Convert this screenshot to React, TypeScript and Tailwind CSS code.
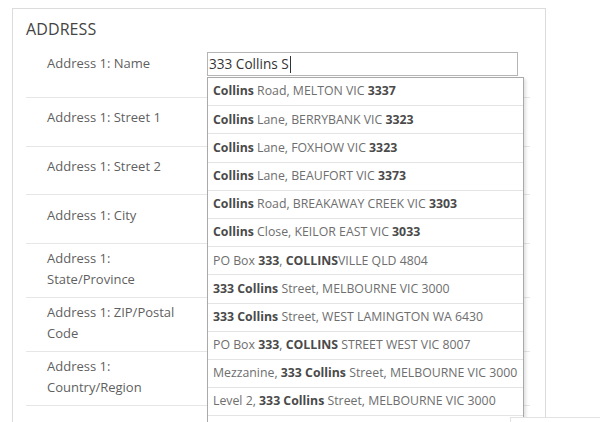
import React from 'react';

type Part = { t: string; b?: boolean };

const suggestions: Part[][] = [
  [{ t: 'Collins', b: true }, { t: ' Road, MELTON VIC ' }, { t: '3337', b: true }],
  [{ t: 'Collins', b: true }, { t: ' Lane, BERRYBANK VIC ' }, { t: '3323', b: true }],
  [{ t: 'Collins', b: true }, { t: ' Lane, FOXHOW VIC ' }, { t: '3323', b: true }],
  [{ t: 'Collins', b: true }, { t: ' Lane, BEAUFORT VIC ' }, { t: '3373', b: true }],
  [{ t: 'Collins', b: true }, { t: ' Road, BREAKAWAY CREEK VIC ' }, { t: '3303', b: true }],
  [{ t: 'Collins', b: true }, { t: ' Close, KEILOR EAST VIC ' }, { t: '3033', b: true }],
  [{ t: 'PO Box ' }, { t: '333', b: true }, { t: ', ' }, { t: 'COLLINS', b: true }, { t: 'VILLE QLD 4804' }],
  [{ t: '333 Collins', b: true }, { t: ' Street, MELBOURNE VIC 3000' }],
  [{ t: '333 Collins', b: true }, { t: ' Street, WEST LAMINGTON WA 6430' }],
  [{ t: 'PO Box ' }, { t: '333', b: true }, { t: ', ' }, { t: 'COLLINS', b: true }, { t: ' STREET WEST VIC 8007' }],
  [{ t: 'Mezzanine, ' }, { t: '333 Collins', b: true }, { t: ' Street, MELBOURNE VIC 3000' }],
  [{ t: 'Level 2, ' }, { t: '333 Collins', b: true }, { t: ' Street, MELBOURNE VIC 3000' }],
  [],
];

const rows: { label: string[]; h: string; pt: string }[] = [
  { label: ['Address 1: Street 1'], h: 'h-[49px]', pt: 'pt-[9px]' },
  { label: ['Address 1: Street 2'], h: 'h-[48px]', pt: 'pt-[9px]' },
  { label: ['Address 1: City'], h: 'h-[49px]', pt: 'pt-[10px]' },
  { label: ['Address 1:', 'State/Province'], h: 'h-[54px]', pt: 'pt-[4px]' },
  { label: ['Address 1: ZIP/Postal', 'Code'], h: 'h-[54px]', pt: 'pt-[4px]' },
  { label: ['Address 1:', 'Country/Region'], h: 'h-[54px]', pt: 'pt-[4px]' },
];

export default function App() {
  return (
    <div className="relative w-[600px] h-[422px] overflow-hidden bg-white font-['Open_Sans',sans-serif]">
      <div className="ml-[12px] mt-[8px] w-[534px] h-[430px] border border-[#dcdcdc] pl-[13px] pr-[15px]">
        <h2 className="pt-[9px] h-[36px] text-[16px] leading-[22px] text-[#444] tracking-[0.1px]">ADDRESS</h2>

        {/* name row with input */}
        <div className="flex h-[53px] border-b border-[#e6e6e6]">
          <div className="w-[181px] pl-[21px] pt-[8px] text-[13px] leading-[21px] text-[#5f5f5f]">
            Address 1: Name
          </div>
          <div className="pt-[7px]">
            <div className="w-[311px] h-[24px] border border-[#b4b4b4] flex items-center pl-[1px] text-[13.6px] text-[#333]">
              333 Collins S<span className="w-px h-[17px] bg-[#333] ml-px" />
            </div>
          </div>
        </div>

        {rows.map((r, i) => (
          <div key={i} className={`${r.h} border-b border-[#e6e6e6]`}>
            <div className={`pl-[21px] ${r.pt} text-[13px] leading-[21px] text-[#5f5f5f]`}>
              {r.label.map((l, j) => (
                <div key={j}>{l}</div>
              ))}
            </div>
          </div>
        ))}
      </div>

      {/* suggestions dropdown */}
      <div className="absolute left-[207px] top-[77px] w-[317px] bg-white border border-[#a9a9a9] shadow-[2px_2px_3px_rgba(0,0,0,0.12)]">
        {suggestions.map((s, i) => (
          <div
            key={i}
            className="h-[28.2px] border-b border-[#e3e3e3] pl-[5px] flex items-center text-[12.3px] text-[#6e6e6e] whitespace-nowrap"
          >
            {s.map((p, j) =>
              p.b ? (
                <span key={j} className="font-bold text-[#4a4a4a] whitespace-pre">
                  {p.t}
                </span>
              ) : (
                <span key={j} className="whitespace-pre">
                  {p.t}
                </span>
              )
            )}
          </div>
        ))}
      </div>

      <div className="absolute left-[510px] top-[417px] w-[90px] h-[10px] border-t border-l border-[#e2e2e2] bg-white" />
    </div>
  );
}
